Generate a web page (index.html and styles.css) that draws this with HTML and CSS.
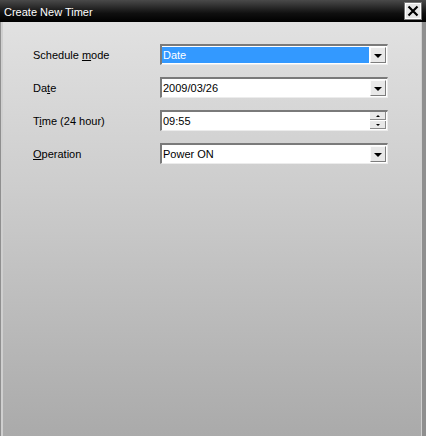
FILE: index.html
```html
<!DOCTYPE html>
<html>
<head>
    <meta charset="UTF-8">
    <title>Create New Timer</title>
    <link rel="stylesheet" href="styles.css">
</head>
<body>
    <!-- dialog window -->
    <div class="window">
        <div class="title-bar">
            <span class="title">Create New Timer</span>
            <div class="close-btn">
                <svg width="12" height="12" viewBox="0 0 12 12">
                    <path d="M1.5 1.5 L10.5 10.5 M10.5 1.5 L1.5 10.5" stroke="#000" stroke-width="2.2" fill="none"/>
                </svg>
            </div>
        </div>

        <div class="client">
            <div class="row">
                <label class="label">Schedule <u>m</u>ode</label>
                <div class="field">
                    <span class="value selected">Date</span>
                    <div class="drop-btn"><span class="arrow"></span></div>
                </div>
            </div>
            <div class="row">
                <label class="label">Da<u>t</u>e</label>
                <div class="field">
                    <span class="value">2009/03/26</span>
                    <div class="drop-btn"><span class="arrow"></span></div>
                </div>
            </div>
            <div class="row">
                <label class="label">T<u>i</u>me (24 hour)</label>
                <div class="field">
                    <span class="value">09:55</span>
                    <div class="spin">
                        <div class="spin-btn"><span class="arrow up"></span></div>
                        <div class="spin-btn"><span class="arrow"></span></div>
                    </div>
                </div>
            </div>
            <div class="row">
                <label class="label"><u>O</u>peration</label>
                <div class="field">
                    <span class="value">Power ON</span>
                    <div class="drop-btn"><span class="arrow"></span></div>
                </div>
            </div>
        </div>
    </div>
</body>
</html>
```

FILE: styles.css
```css
/* page */
body {
    margin: 0;
    padding: 0;
    font-family: "Liberation Sans", Arial, sans-serif;
    font-size: 11px;
    color: #000;
}

/* whole dialog */
.window {
    width: 426px;
    height: 436px;
    display: flex;
    flex-direction: column;
    background: #8f8f8f;
}

/* dark title bar */
.title-bar {
    height: 22px;
    display: flex;
    align-items: center;
    justify-content: space-between;
    padding: 0 5px 0 4px;
    background: linear-gradient(#4a4a4a, #101010 60%, #000);
    flex-shrink: 0;
}

.title {
    color: #fff;
    font-size: 11px;
    padding-top: 1px;
}

.close-btn {
    width: 16px;
    height: 16px;
    box-sizing: border-box;
    background: #e6e6e6;
    border: 1px solid #fff;
    outline: 1px solid #777;
    display: flex;
    justify-content: center;
    align-items: center;
}

/* gray client area */
.client {
    flex: 1;
    margin: 0 4px 0 1px;
    border-left: 2px solid #cfcfcf;
    border-right: 1px solid #cfcfcf;
    background: linear-gradient(#e1e1e1, #cdcdcd 40%, #aaaaaa);
    padding: 22px 0 0 30px;
    display: flex;
    flex-direction: column;
    gap: 12px;
}

.row {
    display: flex;
    align-items: center;
    height: 21px;
}

.label {
    width: 127px;
    padding-top: 1px;
}

/* sunken edit / combo box */
.field {
    width: 228px;
    height: 21px;
    box-sizing: border-box;
    background: #fff;
    border-top: 2px solid #7a7a7a;
    border-left: 2px solid #7a7a7a;
    border-right: 1px solid #ececec;
    border-bottom: 1px solid #ececec;
    display: flex;
    align-items: center;
    padding: 0 1px 0 0;
}

.value {
    flex: 1;
    height: 16px;
    line-height: 16px;
    padding-left: 1px;
}

.value.selected {
    background: #3399ff;
    color: #fff;
    margin-right: 1px;
}

/* dropdown button */
.drop-btn {
    width: 16px;
    height: 16px;
    box-sizing: border-box;
    background: #e8e8e8;
    border-top: 1px solid #fafafa;
    border-left: 1px solid #fafafa;
    border-right: 1px solid #7d7d7d;
    border-bottom: 1px solid #7d7d7d;
    display: flex;
    justify-content: center;
    align-items: center;
}

.arrow {
    width: 0;
    height: 0;
    border-left: 4px solid transparent;
    border-right: 4px solid transparent;
    border-top: 4px solid #000;
    margin-top: 1px;
}

/* spinner */
.spin {
    display: flex;
    flex-direction: column;
    gap: 1px;
    margin-top: -1px;
}

.spin-btn {
    width: 16px;
    height: 8px;
    box-sizing: border-box;
    background: #e8e8e8;
    border-right: 1px solid #8a8a8a;
    border-bottom: 1px solid #8a8a8a;
    display: flex;
    justify-content: center;
    align-items: center;
}

.spin-btn .arrow {
    border-left-width: 2px;
    border-right-width: 2px;
    border-top-width: 2px;
    margin-top: 0;
}

.spin-btn .arrow.up {
    border-top: 0;
    border-bottom: 2px solid #000;
}
```
